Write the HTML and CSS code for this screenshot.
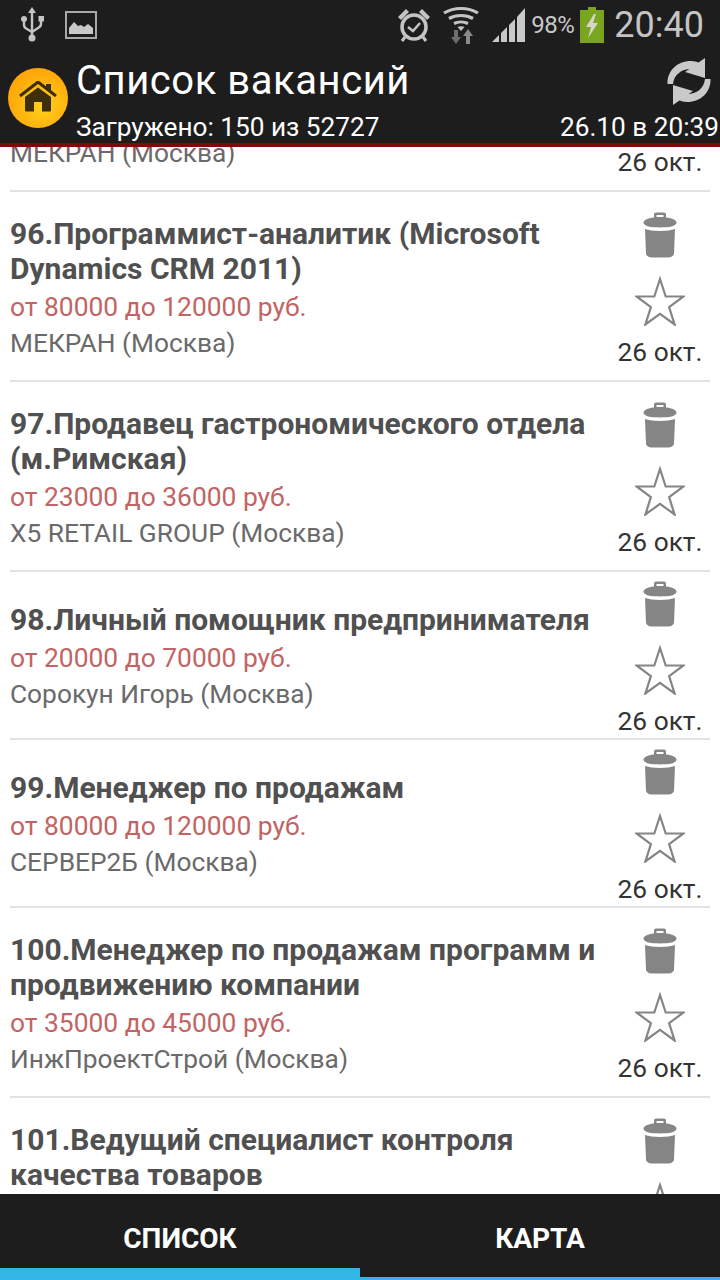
FILE: index.html
```html
<!DOCTYPE html>
<html lang="ru">
<head>
<meta charset="utf-8">
<title>Список вакансий</title>
<link rel="stylesheet" href="styles.css">
</head>
<body>
<svg class="defs" width="0" height="0" aria-hidden="true">
  <defs>
    <symbol id="trash" viewBox="0 0 34 46">
      <path d="M11 6V2.500C11 1.400 11.900.5 13 .5h8c1.100 0 2 .9 2 2V6h-2.500V3h-7v3z" fill="#858585"/>
      <path d="M.5 10.500C.5 7.500 7 5 17 5s16.500 2.500 16.500 5.500c0 2-3 3.500-5 4-3 .6-7 .9-11.500.9s-8.500-.3-11.500-.9c-2-.5-5-2-5-4z" fill="#858585"/>
      <path d="M2 17c3.500 1.300 9 2 15 2s11.500-.7 15-2l-1 24.500C30.800 44 28 45.500 25 45.500H9c-3 0-5.800-1.500-6-4z" fill="#858585"/>
    </symbol>
    <symbol id="star" viewBox="0 0 50 50">
      <path d="M25 3l5.700 17.500H48.500L34.100 31.200l5.500 17.300L25 37.800 10.400 48.500l5.500-17.300L1.500 20.500h17.800z" fill="none" stroke="#858585" stroke-width="2.200"/>
    </symbol>
    <symbol id="refresh-half" viewBox="0 0 46 50">
      <path d="M.5 27C0 14 10 4 24 4c4 0 7 1 10 3l-4 7c-2-1.500-4-2-6-2C14 12 7 18 6 27z" fill="#c9c9c9"/>
      <path d="M38 1v20l-20-6z" fill="#c9c9c9"/>
    </symbol>
  </defs>
</svg>
<div class="phone">
  <div class="status">
    <div class="status-left">
      <svg class="ic-usb" width="24" height="36" viewBox="0 0 24 36"><g fill="none" stroke="#c4c4c4" stroke-width="2.400"><path d="M11 4v27"/><path d="M3 14v4c0 2 1 3 3 4l5 3"/><path d="M20 12v5c0 2-1 3-3 4l-6 4"/></g><path d="M11 0l4 6H7z" fill="#c4c4c4"/><circle cx="11" cy="31" r="3.500" fill="#c4c4c4"/><circle cx="3" cy="12" r="3" fill="#c4c4c4"/><rect x="17.500" y="9" width="5.500" height="5.500" fill="#c4c4c4"/></svg>
      <svg class="ic-pic" width="32" height="28" viewBox="0 0 32 28"><rect x="1" y="1" width="30" height="26" fill="none" stroke="#a9a9a9" stroke-width="2"/><path d="M4 23v-6l5-6 4 4 3-1 3 2 4-3 5 4v6z" fill="#c9c9c9"/></svg>
    </div>
    <div class="status-right">
      <svg class="ic-alarm" width="34" height="36" viewBox="0 0 34 36"><circle cx="17" cy="20" r="12" fill="none" stroke="#c4c4c4" stroke-width="3.500"/><path d="M11 20l5 4 7-8" fill="none" stroke="#c4c4c4" stroke-width="2.500"/><path d="M1 10L9 2l3 3-8 8zM33 10L25 2l-3 3 8 8z" fill="#c4c4c4"/><path d="M8 30l-3 4M26 30l3 4" stroke="#c4c4c4" stroke-width="3"/></svg>
      <svg class="ic-wifi" width="36" height="38" viewBox="0 0 36 38"><g fill="none" stroke="#c4c4c4" stroke-width="3.200"><path d="M1 7c10-6 24-6 34 0"/><path d="M6 12.500c7-4 17-4 24 0"/><path d="M11 17.500c4-2 10-2 14 0"/></g><path d="M18 25l-3.500-4c2-1 5-1 7 0z" fill="#c4c4c4"/><path d="M11 24h4v7h3l-5 7-5-7h3z" fill="#6e6e6e"/><path d="M23 38h4v-8h3l-5-7-5 7h3z" fill="#8a8a8a"/></svg>
      <svg class="ic-signal" width="34" height="34" viewBox="0 0 34 34"><path d="M0 34L7 27v7zM9 25l6-6v15H9zM17 17l6-6v23h-6zM25 9l8-9v34h-8z" fill="#c9c9c9"/></svg>
      <span class="batt-pct">98%</span>
      <svg class="ic-batt" width="24" height="36" viewBox="0 0 24 36"><path d="M8 0h8v3h8v33H0V3h8z" fill="#7aa51f"/><path d="M14 7L6 20h5l-3 11 10-15h-5l3-9z" fill="#d5d5c8"/></svg>
      <span class="clock">20:40</span>
    </div>
  </div>

  <header class="appbar">
    <div class="home">
      <svg width="38" height="32" viewBox="0 0 38 32"><path d="M1 15L19 1l18 14" fill="none" stroke="#3d2f0c" stroke-width="3"/><path d="M27 3h5v8l-5-4z" fill="#3d2f0c"/><path d="M6 16L19 6.500 32 16v13c0 1-.5 1.500-1.500 1.500H23V21h-8v9.500H7.500C6.500 30.500 6 30 6 29z" fill="#3d2f0c"/></svg>
    </div>
    <div class="appbar-main">
      <div class="appbar-top">
        <h1 class="title">Список вакансий</h1>
        <svg class="refresh" width="46" height="50" viewBox="0 0 46 50"><use href="#refresh-half"/><use href="#refresh-half" transform="rotate(180 22 24.500)"/></svg>
      </div>
      <div class="appbar-sub">
        <span>Загружено: 150 из 52727</span>
        <span>26.10 в 20:39</span>
      </div>
    </div>
  </header>

  <main class="list">
    <div class="list-scroll">
      <article class="row row-first">
        <div class="info">
          <h2 class="job">&nbsp;<br>&nbsp;</h2>
          <p class="pay">&nbsp;</p>
          <p class="org">МЕКРАН (Москва)</p>
        </div>
        <div class="side">
          <svg class="trash"><use href="#trash"/></svg>
          <svg class="star"><use href="#star"/></svg>
          <span class="date">26 окт.</span>
        </div>
      </article>
      <article class="row">
        <div class="info">
          <h2 class="job">96.Программист-аналитик (Microsoft Dynamics CRM 2011)</h2>
          <p class="pay">от 80000 до 120000 руб.</p>
          <p class="org">МЕКРАН (Москва)</p>
        </div>
        <div class="side">
          <svg class="trash"><use href="#trash"/></svg>
          <svg class="star"><use href="#star"/></svg>
          <span class="date">26 окт.</span>
        </div>
      </article>
      <article class="row">
        <div class="info">
          <h2 class="job">97.Продавец гастрономического отдела (м.Римская)</h2>
          <p class="pay">от 23000 до 36000 руб.</p>
          <p class="org">X5 RETAIL GROUP (Москва)</p>
        </div>
        <div class="side">
          <svg class="trash"><use href="#trash"/></svg>
          <svg class="star"><use href="#star"/></svg>
          <span class="date">26 окт.</span>
        </div>
      </article>
      <article class="row row-single">
        <div class="info">
          <h2 class="job">98.Личный помощник предпринимателя</h2>
          <p class="pay">от 20000 до 70000 руб.</p>
          <p class="org">Сорокун Игорь (Москва)</p>
        </div>
        <div class="side">
          <svg class="trash"><use href="#trash"/></svg>
          <svg class="star"><use href="#star"/></svg>
          <span class="date">26 окт.</span>
        </div>
      </article>
      <article class="row row-single">
        <div class="info">
          <h2 class="job">99.Менеджер по продажам</h2>
          <p class="pay">от 80000 до 120000 руб.</p>
          <p class="org">СЕРВЕР2Б (Москва)</p>
        </div>
        <div class="side">
          <svg class="trash"><use href="#trash"/></svg>
          <svg class="star"><use href="#star"/></svg>
          <span class="date">26 окт.</span>
        </div>
      </article>
      <article class="row">
        <div class="info">
          <h2 class="job">100.Менеджер по продажам программ и продвижению компании</h2>
          <p class="pay">от 35000 до 45000 руб.</p>
          <p class="org">ИнжПроектСтрой (Москва)</p>
        </div>
        <div class="side">
          <svg class="trash"><use href="#trash"/></svg>
          <svg class="star"><use href="#star"/></svg>
          <span class="date">26 окт.</span>
        </div>
      </article>
      <article class="row">
        <div class="info">
          <h2 class="job">101.Ведущий специалист контроля качества товаров</h2>
          <p class="pay">&nbsp;</p>
          <p class="org">&nbsp;</p>
        </div>
        <div class="side">
          <svg class="trash"><use href="#trash"/></svg>
          <svg class="star"><use href="#star"/></svg>
          <span class="date">26 окт.</span>
        </div>
      </article>
    </div>
  </main>

  <nav class="tabs">
    <div class="tab tab-active">СПИСОК</div>
    <div class="tab">КАРТА</div>
  </nav>
</div>
</body>
</html>
```
FILE: styles.css
```css
* { box-sizing: border-box; }
html, body { margin: 0; padding: 0; }
body { background: #fff; font-family: Roboto, "Noto Sans", sans-serif; }
.defs { display: block; height: 0; }
.phone { width: 720px; height: 1280px; display: flex; flex-direction: column; overflow: hidden; }

.status { flex: 0 0 50px; background: #1d1d1d; display: flex; justify-content: space-between; align-items: center; }
.status-left { display: flex; align-items: center; padding-left: 21px; gap: 20px; }
.status-right { display: flex; align-items: center; padding-right: 16px; }
.ic-alarm { margin-right: 12px; }
.ic-wifi { margin-right: 13px; }
.ic-signal { margin-right: 5px; }
.batt-pct { font-size: 24px; color: #c9c9c9; margin-right: 6px; letter-spacing: -.5px; }
.ic-batt { margin-right: 10px; }
.clock { font-size: 36px; color: #c4c4c4; }

.appbar { flex: 0 0 95px; background: #1d1d1d; border-bottom: 4px solid #7d0a0a; display: flex; padding-left: 8px; }
.home { flex: 0 0 60px; height: 60px; margin-top: 18px; border-radius: 50%; background: radial-gradient(circle at 58% 62%, #ffd21c 0%, #ffb810 40%, #ff9600 100%); display: flex; align-items: center; justify-content: center; padding-bottom: 2px; }
.appbar-main { flex: 1; min-width: 0; margin-left: 8px; display: flex; flex-direction: column; }
.appbar-top { display: flex; justify-content: space-between; height: 62px; padding-right: 7px; }
.title { margin: 0; font-size: 40px; font-weight: 400; color: #fff; line-height: 62px; letter-spacing: .55px; }
.refresh { margin-top: 7px; }
.appbar-sub { display: flex; justify-content: space-between; font-size: 26.2px; line-height: 31px; color: #fff; padding-right: 1px; }

.list { flex: 1; min-height: 0; overflow: hidden; }
.row { margin: 0 10px; min-height: 168px; border-bottom: 2px solid #e2e2e2; display: flex; align-items: center; justify-content: space-between; }
.row-first { margin-top: -145px; }
.info { flex: 1; min-width: 0; padding: 24px 0 19px; }
.row-single .info { padding-bottom: 20px; }
.job { margin: 0; font-size: 30px; font-weight: 700; line-height: 35px; color: #505050; }
.pay { margin: 3px 0 0; font-size: 26.4px; line-height: 36px; color: #c26464; }
.org { margin: 0; font-size: 26.3px; line-height: 36px; color: #6a6a6a; }
.side { flex: 0 0 100px; height: 166px; display: flex; flex-direction: column; align-items: center; }
.trash { width: 34px; height: 46px; margin-top: 9px; flex: none; }
.star { width: 50px; height: 50px; margin-top: 18px; flex: none; }
.date { margin-top: 11px; font-size: 26.3px; line-height: 30px; color: #333; white-space: nowrap; }

.tabs { flex: 0 0 86px; background: #1d1d1d; display: flex; }
.tab { flex: 1; display: flex; align-items: center; justify-content: center; font-size: 28px; font-weight: 700; color: #fff; border-bottom: 3px solid #33b5e5; padding-top: 6px; }
.tab-active { border-bottom-width: 12px; padding-top: 15px; }
```
